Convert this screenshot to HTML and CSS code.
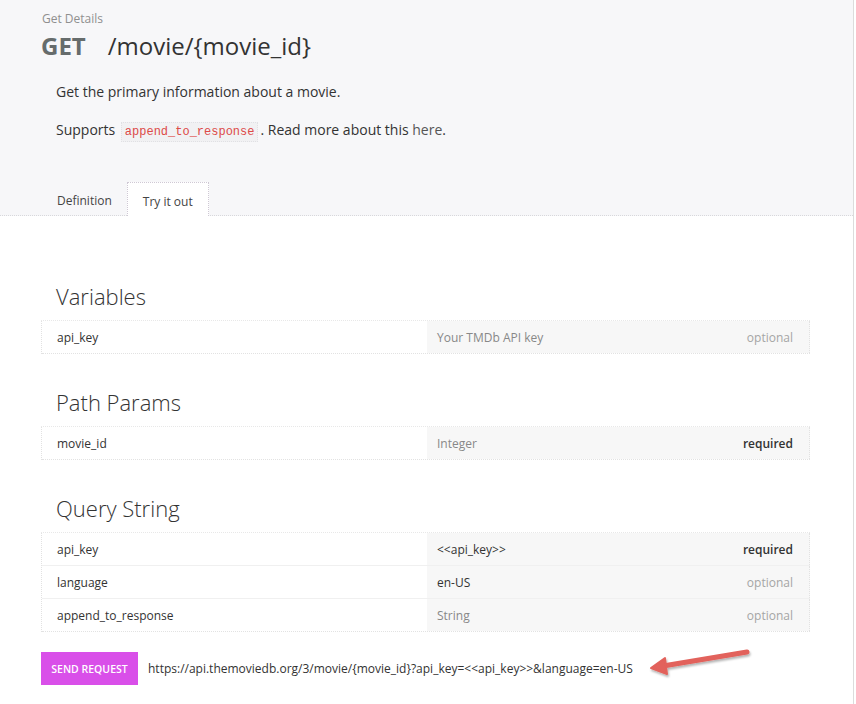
FILE: index.html
```html
<!DOCTYPE html>
<html>
<head>
<meta charset="utf-8">
<link rel="stylesheet" href="styles.css">
</head>
<body>
<div class="page">
  <header class="head">
    <div class="crumb">Get Details</div>
    <h1 class="title"><span class="verb">GET</span><span class="path">/movie/{movie_id}</span></h1>
    <div class="desc">
      <p>Get the primary information about a movie.</p>
      <p>Supports <code>append_to_response</code>. Read more about this <a href="#">here</a>.</p>
    </div>
    <nav class="tabs">
      <span class="tab">Definition</span>
      <span class="tab active">Try it out</span>
    </nav>
  </header>
  <main class="body">
    <section class="group">
      <h2>Variables</h2>
      <div class="table">
        <div class="row"><div class="k">api_key</div><div class="v"><span class="ph">Your TMDb API key</span><span class="opt">optional</span></div></div>
      </div>
    </section>
    <section class="group">
      <h2>Path Params</h2>
      <div class="table">
        <div class="row"><div class="k">movie_id</div><div class="v"><span class="ph">Integer</span><span class="req">required</span></div></div>
      </div>
    </section>
    <section class="group">
      <h2>Query String</h2>
      <div class="table">
        <div class="row"><div class="k">api_key</div><div class="v"><span class="val">&lt;&lt;api_key&gt;&gt;</span><span class="req">required</span></div></div>
        <div class="row"><div class="k">language</div><div class="v"><span class="val">en-US</span><span class="opt">optional</span></div></div>
        <div class="row"><div class="k">append_to_response</div><div class="v"><span class="ph">String</span><span class="opt">optional</span></div></div>
      </div>
    </section>
    <div class="send">
      <button class="btn">SEND REQUEST</button>
      <span class="url">https://api.themoviedb.org/3/movie/{movie_id}?api_key=&lt;&lt;api_key&gt;&gt;&amp;language=en-US</span>
      <svg class="arrow" width="110" height="36" viewBox="0 0 110 36">
        <defs>
          <filter id="sh" x="-20%" y="-50%" width="140%" height="200%">
            <feDropShadow dx="1" dy="2" stdDeviation="1.2" flood-color="#000" flood-opacity="0.3"/>
          </filter>
        </defs>
        <g filter="url(#sh)" fill="#e2625b" stroke="#e2625b" stroke-linecap="round" stroke-linejoin="round">
          <path d="M18 22 L102 8" stroke-width="5" fill="none"/>
          <path d="M6 24 L20 14 L22 30 Z" stroke-width="2"/>
        </g>
      </svg>
    </div>
  </main>
</div>
</body>
</html>
```
FILE: styles.css
```css
* { box-sizing: border-box; }
html, body { margin: 0; padding: 0; background: #fff; }
body {
  font-family: "Open Sans", "Liberation Sans", sans-serif;
  color: #333;
  width: 856px;
  height: 704px;
  overflow: hidden;
}
.page {
  width: 854px;
  min-height: 704px;
  border-right: 1px solid #dcdcdc;
}
.head {
  background: #f7f7f9;
  height: 216px;
  padding: 10px 0 0 42px;
  border-bottom: 1px dotted #d8d8dc;
  position: relative;
}
.crumb {
  font-size: 12px;
  color: #8f8f8f;
  line-height: 17px;
}
.title {
  margin: 3px 0 0 -1px;
  font-size: 24px;
  line-height: 32px;
  font-weight: 400;
  display: flex;
  gap: 22px;
}
.verb { font-weight: 700; color: #666c6c; }
.path { color: #333; }
.desc {
  margin: 20px 0 0 14px;
  font-size: 14px;
  line-height: 20px;
}
.desc p { margin: 0 0 18px 0; }
.desc code {
  font-family: "Liberation Mono", "DejaVu Sans Mono", monospace;
  font-size: 12px;
  color: #dd4a48;
  background: #f1f1f3;
  border: 1px dotted #e0e0e4;
  padding: 2px 3px;
  margin-right: 2px;
  margin-left: 2px;
}
.desc a { color: #555; text-decoration: none; }
.tabs {
  position: absolute;
  left: 42px;
  bottom: -1px;
  display: flex;
  font-size: 12px;
}
.tab {
  display: block;
  padding: 0 15px;
  height: 34px;
  line-height: 38px;
  color: #444;
}
.tab.active {
  background: #fff;
  border: 1px dotted #cfc8d4;
  border-bottom: none;
  padding: 0 15px;
}
.body {
  padding: 65px 0 0 41px;
  width: 810px;
}
.group { margin-bottom: 33px; }
.group:last-of-type { margin-bottom: 20px; }
.group h2 {
  margin: 0 0 9px 15px;
  font-size: 22px;
  font-weight: 300;
  line-height: 30px;
  color: #333;
}
.table {
  border-left: 1px dotted #e2e2e2;
  border-top: 1px dotted #e8e8e8;
}
.row {
  display: flex;
  height: 33px;
  border-bottom: 1px solid #f0f0f0;
  font-size: 12px;
}
.row:last-child { border-bottom: 1px dotted #e2e2e2; }
.k {
  width: 385px;
  padding-left: 15px;
  display: flex;
  align-items: center;
  color: #333;
  background: #fff;
}
.v {
  flex: 1;
  background: #f7f7f7;
  display: flex;
  align-items: center;
  justify-content: space-between;
  padding: 0 16px 0 10px;
  border-right: 1px dotted #e2e2e2;
}
.ph { color: #888; }
.val { color: #333; }
.opt { color: #a5a5a5; }
.req { color: #333; font-weight: 600; }
.send {
  display: flex;
  align-items: center;
  position: relative;
  height: 33px;
}
.btn {
  width: 97px;
  height: 33px;
  border: none;
  background: #d94fe9;
  color: #fff;
  font-family: "Open Sans", "Liberation Sans", sans-serif;
  font-size: 10.5px;
  font-weight: 600;
  letter-spacing: 0;
  padding: 0;
  cursor: pointer;
}
.url {
  margin-left: 10px;
  font-size: 12px;
  color: #333;
}
.arrow {
  position: absolute;
  left: 604px;
  top: -8px;
}
```
